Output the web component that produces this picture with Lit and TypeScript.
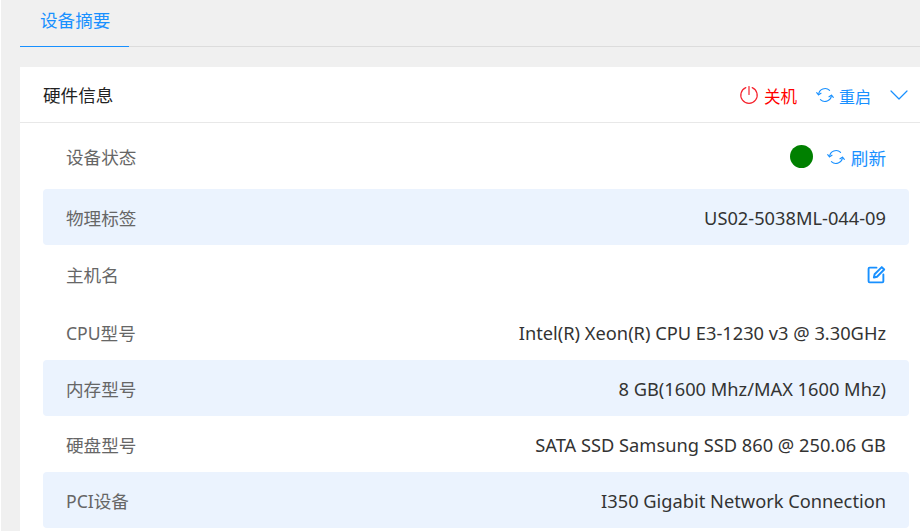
import { LitElement, html, css } from "lit";
import { customElement } from "lit/decorators.js";

const refresh = html`<svg class="ic" viewBox="0 0 18 18" width="18" height="18" fill="none" stroke="#1890ff" stroke-width="1.1" stroke-linecap="round" stroke-linejoin="round">
  <path d="M2.6 8.6A6.5 6.5 0 0 1 13.6 4.4"/><path d="M15.4 9.4A6.5 6.5 0 0 1 4.4 13.6"/>
  <path d="M0.7 6.6L2.5 8.9L5 7.2"/><path d="M17.3 11.4L15.5 9.1L13 10.8"/></svg>`;

const rows: { label: string; value?: string; blue?: boolean; kind?: string; h: number }[] = [
  { label: "设备状态", kind: "status", h: 66 },
  { label: "物理标签", value: "US02-5038ML-044-09", blue: true, h: 56 },
  { label: "主机名", kind: "edit", h: 59 },
  { label: "CPU型号", value: "Intel(R) Xeon(R) CPU E3-1230 v3 @ 3.30GHz", h: 56 },
  { label: "内存型号", value: "8 GB(1600 Mhz/MAX 1600 Mhz)", blue: true, h: 56 },
  { label: "硬盘型号", value: "SATA SSD Samsung SSD 860 @ 250.06 GB", h: 56 },
  { label: "PCI设备", value: "I350 Gigabit Network Connection", blue: true, h: 56 },
];

@customElement("app-root")
export class AppRoot extends LitElement {
  static styles = css`
    :host { display: block; width: 920px; height: 531px; overflow: hidden; background: #f0f0f0;
      font-family: "Noto Sans", "Noto Sans CJK SC", sans-serif; font-size: 17.6px; }
    .page { box-sizing: border-box; height: 531px; border-left: 1px solid #fff; padding-left: 19px; }
    .tabs { height: 46px; border-bottom: 1px solid #dcdcdc; display: flex; }
    .tab { width: 109px; height: 47px; box-sizing: border-box; padding: 8px 0 0 20px; color: #1890ff; border-bottom: 1px solid #1890ff; line-height: 24px; }
    .card { margin-top: 20px; background: #fff; height: 470px; }
    .head { height: 55px; border-bottom: 1px solid #e8e8e8; padding: 0 12px 0 23px; display: flex; align-items: center; color: #222; }
    .title { flex: 1; }
    .act { display: flex; align-items: center; gap: 5px; font-size: 16px; color: #1890ff; margin-right: 19px; position: relative; top: 1px; }
    .act.red { color: #f00; margin-right: 19px; font-size: 16.5px; }
    .act svg { position: relative; top: -1px; }
    .chev { margin-top: 1px; }
    .rows { padding: 0 11px 0 23px; }
    .row { display: flex; justify-content: space-between; align-items: center; padding: 0 23px; color: #333; }
    .row.blue { background: #ebf3fe; border-radius: 4px; }
    .label { color: #666; }
    .value { font-size: 18.25px; }
    .status { display: flex; align-items: center; gap: 14px; color: #1890ff; }
    .dot { width: 23px; height: 23px; border-radius: 50%; background: #008000; }
    .ref { display: flex; align-items: center; gap: 6px; margin-top: 2px; }
  `;
  render() {
    return html`<div class="page">
      <div class="tabs"><div class="tab">设备摘要</div></div>
      <div class="card">
        <div class="head">
          <div class="title">硬件信息</div>
          <div class="act red"><svg viewBox="0 0 20 20" width="20" height="20" fill="none" stroke="#f5222d" stroke-width="1.2" stroke-linecap="round"><path d="M6.8 2.6A8.2 8.2 0 1 0 13.2 2.6"/><path d="M10 1.5v8"/></svg>关机</div>
          <div class="act">${refresh}重启</div>
          <svg class="chev" viewBox="0 0 18 10" width="18" height="10" fill="none" stroke="#1890ff" stroke-width="1.2" stroke-linecap="round" stroke-linejoin="round"><path d="M1 1l8 8 8-8"/></svg>
        </div>
        <div class="rows">
          ${rows.map((r) => html`<div class="row ${r.blue ? "blue" : ""}" style="height:${r.h}px">
            <span class="label">${r.label}</span>
            ${r.kind === "status"
              ? html`<div class="status"><span class="dot"></span><span class="ref">${refresh}刷新</span></div>`
              : r.kind === "edit"
              ? html`<svg viewBox="0 0 18 18" width="19" height="19" fill="none" stroke="#1890ff" stroke-width="1.8" stroke-linejoin="round" stroke-linecap="round"><path d="M9 2.5H2.5a1 1 0 0 0-1 1V15.5a1 1 0 0 0 1 1H14.5a1 1 0 0 0 1-1V9"/><path d="M6.5 11.8l.7-3L14 2l2.3 2.3-6.8 6.8z"/></svg>`
              : html`<span class="value">${r.value}</span>`}
          </div>`)}
        </div>
      </div>
    </div>`;
  }
}
